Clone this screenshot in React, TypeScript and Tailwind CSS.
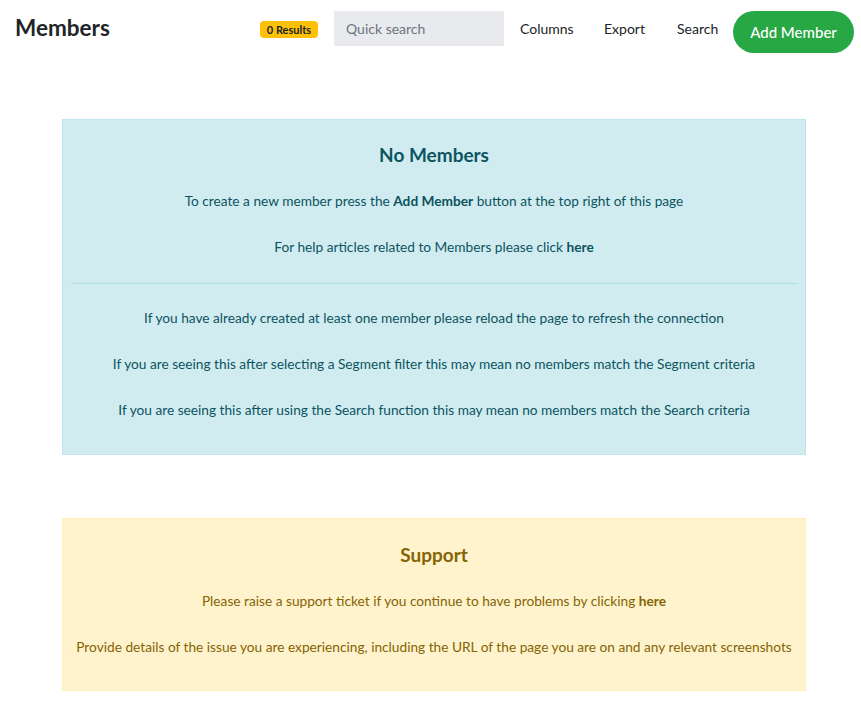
const blueLines = [
  "If you have already created at least one member please reload the page to refresh the connection",
  "If you are seeing this after selecting a Segment filter this may mean no members match the Segment criteria",
  "If you are seeing this after using the Search function this may mean no members match the Search criteria",
];

function Header() {
  return (
    <header className="flex items-start h-[64px] pl-[15px] pr-[7px]">
      <h1 className="mt-[14px] text-[22.5px] leading-[28px] font-bold text-[#212529]">Members</h1>
      <div className="flex-1" />
      <span className="mt-[21px] h-[17px] w-[58px] text-center rounded-[4px] bg-[#ffc107] text-[11px] leading-[17px] font-bold text-[#212529]">
        0 Results
      </span>
      <input
        placeholder="Quick search"
        className="mt-[11px] ml-[16px] h-[35px] w-[170px] px-3 bg-[#e9eaed] text-[14px] text-[#212529] placeholder:text-[#6c757d] outline-none"
      />
      <a className="mt-[19px] w-[84px] pl-4 text-[14px] leading-[20px] text-[#212529]">Columns</a>
      <a className="mt-[19px] w-[73px] pl-4 text-[14px] leading-[20px] text-[#212529]">Export</a>
      <a className="mt-[19px] w-[72px] pl-4 text-[14px] leading-[20px] text-[#212529]">Search</a>
      <button className="mt-[11px] h-[42px] w-[121px] rounded-full bg-[#28a745] text-white text-[15px] font-medium">
        Add Member
      </button>
    </header>
  );
}

function App() {
  return (
    <div className="min-h-[708px] bg-white" style={{ fontFamily: "Lato, 'Noto Sans', sans-serif" }}>
      <Header />

      <section className="mt-[55px] ml-[62px] w-[744px] border border-[#bee5eb] bg-[#d1ecf1] text-[#0c5460] text-center text-[13.7px] pt-[12px] pb-[21px]">
        <h2 className="h-[46px] leading-[46px] text-[19px] font-bold">No Members</h2>
        <p className="h-[46px] leading-[46px]">
          To create a new member press the <b>Add Member</b> button at the top right of this page
        </p>
        <p className="h-[46px] leading-[46px]">
          For help articles related to Members please click <b>here</b>
        </p>
        <hr className="mx-2 mt-[13px] mb-[11px] border-0 border-t border-[#abdde5]" />
        {blueLines.map((line, i) => (
          <p key={i} className="h-[46px] leading-[46px]">{line}</p>
        ))}
      </section>

      <section className="mt-[63px] ml-[62px] w-[744px] border border-[#ffeeba] bg-[#fff3cd] text-[#856404] text-center text-[13.7px] pt-[13px] pb-[20px]">
        <h2 className="h-[46px] leading-[46px] text-[19px] font-bold">Support</h2>
        <p className="h-[46px] leading-[46px]">
          Please raise a support ticket if you continue to have problems by clicking <b>here</b>
        </p>
        <p className="h-[46px] leading-[46px]">
          Provide details of the issue you are experiencing, including the URL of the page you are on and any relevant screenshots
        </p>
      </section>
    </div>
  );
}

export default App;
